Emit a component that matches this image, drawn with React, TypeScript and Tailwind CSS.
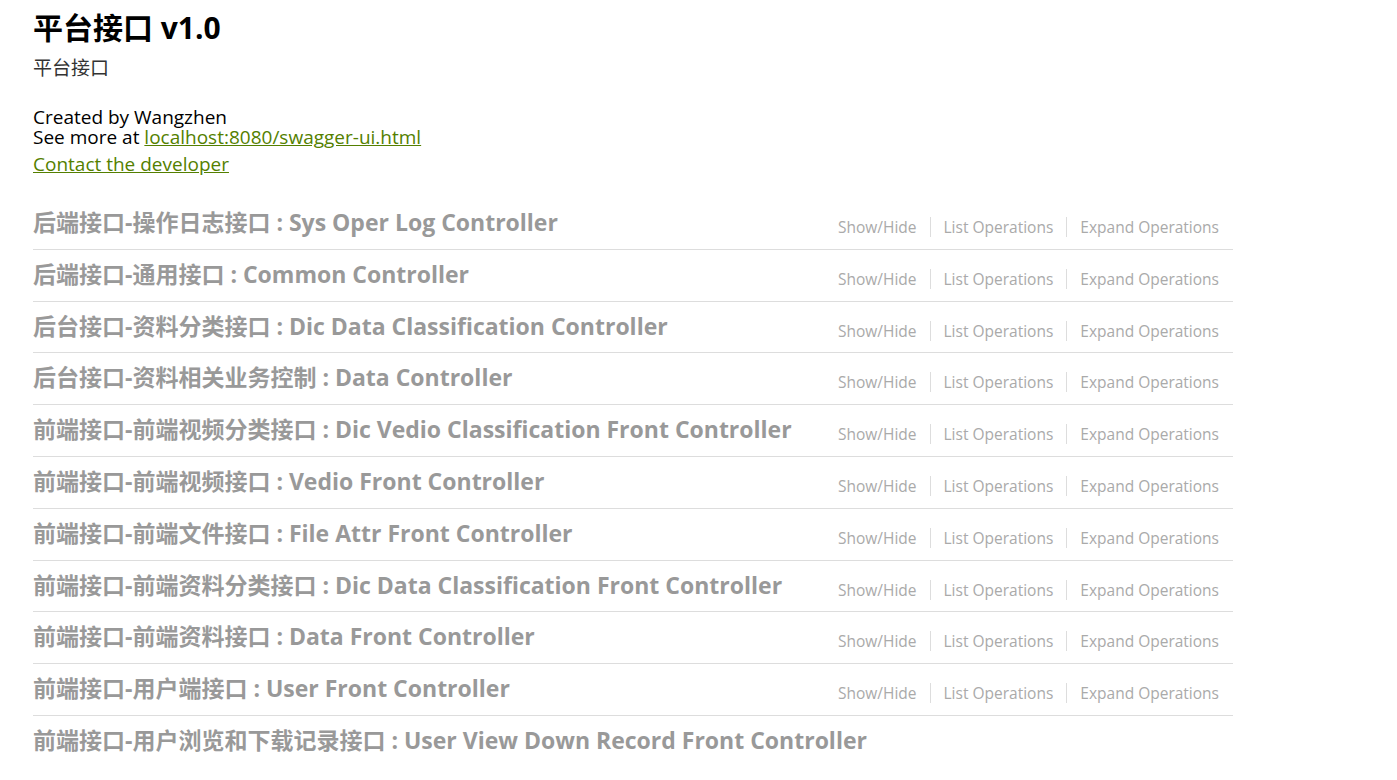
import React from 'react'

const resources = [
    '后端接口-操作日志接口 : Sys Oper Log Controller',
    '后端接口-通用接口 : Common Controller',
    '后台接口-资料分类接口 : Dic Data Classification Controller',
    '后台接口-资料相关业务控制 : Data Controller',
    '前端接口-前端视频分类接口 : Dic Vedio Classification Front Controller',
    '前端接口-前端视频接口 : Vedio Front Controller',
    '前端接口-前端文件接口 : File Attr Front Controller',
    '前端接口-前端资料分类接口 : Dic Data Classification Front Controller',
    '前端接口-前端资料接口 : Data Front Controller',
    '前端接口-用户端接口 : User Front Controller',
    '前端接口-用户浏览和下载记录接口 : User View Down Record Front Controller',
]

const font = { fontFamily: '"Open Sans", "Noto Sans CJK SC", sans-serif' }

export default function App() {
    return (
        <div className="min-h-screen bg-white pl-[33px] text-black" style={font}>
            <div className="w-[1200px]">
                <h1 className="pt-[10px] text-[30px] font-bold leading-[36px]">平台接口 v1.0</h1>
                <div className="mt-[10px] text-[19px] leading-[24px] text-[#333]">平台接口</div>
                <div className="mt-[27px] text-[19px] leading-[20px]">
                    <div>Created by Wangzhen</div>
                    <div>
                        See more at{' '}
                        <a href="#" className="text-[#547f00] underline">localhost:8080/swagger-ui.html</a>
                    </div>
                </div>
                <div className="mt-[5px] text-[19px] leading-[24px]">
                    <a href="#" className="text-[#547f00] underline">Contact the developer</a>
                </div>

                <ul className="mt-[22px]">
                    {resources.map((name, i) => (
                        <li
                            key={name}
                            className={`flex h-[51.8px] items-start justify-between ${
                                i < resources.length - 1 ? 'border-b border-[#ddd]' : ''
                            }`}
                        >
                            <a href="#" className="pt-[9px] text-[23px] font-bold leading-[30px] text-[#999]">
                                {name}
                            </a>
                            {i < resources.length - 1 && (
                                <div className="mt-[19px] flex text-[15.5px] leading-[20px] text-[#aaa]">
                                    <a href="#" className="border-r border-[#ddd] px-[13px]">Show/Hide</a>
                                    <a href="#" className="border-r border-[#ddd] px-[13px]">List Operations</a>
                                    <a href="#" className="pl-[13px] pr-[14px]">Expand Operations</a>
                                </div>
                            )}
                        </li>
                    ))}
                </ul>
            </div>
        </div>
    )
}
